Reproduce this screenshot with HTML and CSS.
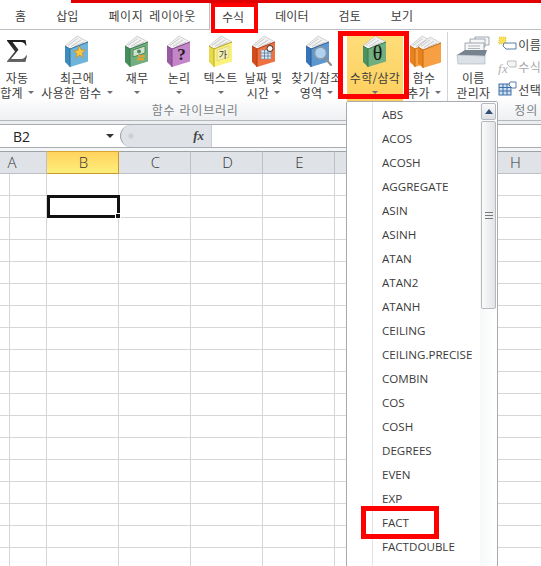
FILE: index.html
```html
<!DOCTYPE html>
<html lang="ko">
<head>
<meta charset="utf-8">
<title>수식</title>
<link rel="stylesheet" href="styles.css">
</head>
<body>
<svg class="defs" width="0" height="0" aria-hidden="true">
  <defs>
    <linearGradient id="sigma-shade" x1="0" y1="0" x2="0" y2="1">
      <stop offset="0" stop-color="#1c1c1c"/>
      <stop offset="0.6" stop-color="#3a3a3a"/>
      <stop offset="1" stop-color="#6a6a6a"/>
    </linearGradient>
    <symbol id="book" viewBox="0 0 26 32">
      <polygon class="b-page" points="1,11 13,1 24,7 6,14"/>
      <path class="b-lines" d="M4 10.500 13.500 3.500M7 11.500 17 5M10 11.500 20 7"/>
      <polygon class="b-spine" points="1,11 6,14 6,32 1,27"/>
      <polygon class="b-front" points="6,14 24,7 24,26.500 6,32"/>
      <path class="b-edge" d="M1 11 6 14 24 7M6 14V32"/>
    </symbol>
  </defs>
</svg>
<div class="page">
  <nav class="tabs">
    <span class="tab">홈</span>
    <span class="tab">삽입</span>
    <span class="tab tab-long">페이지 레이아웃</span>
    <span class="tab tab-active">수식</span>
    <span class="tab">데이터</span>
    <span class="tab">검토</span>
    <span class="tab">보기</span>
  </nav>

  <section class="ribbon">
    <div class="group group-lib">
      <div class="buttons">
        <div class="btn w34">
          <div class="icon">
            <svg width="20" height="22" viewBox="0 0 20 22"><path class="sigma-fill" d="M0 0H18.500L19.500 5.500H18.500C18 3.300 16.500 2 13.500 2H5.500L11.500 9.800 4 19H14C16.800 19 18.300 17.800 19 15.500H20L18.500 22H0V21.300L8 11.500 0 .7Z"/></svg>
          </div>
          <div class="label">자동</div>
          <div class="label">합계<i class="arrow arrow-side"></i></div>
        </div>
        <div class="btn w78">
          <div class="icon">
            <svg class="book book-blue" width="26" height="32"><use href="#book"/><polygon class="star" points="15.500,11 17.300,15 21.500,14.800 18.200,18 19.500,22.500 15.500,20 11.500,23 12.800,18.500 9.500,16 13.700,15.500"/></svg>
          </div>
          <div class="label">최근에</div>
          <div class="label">사용한 함수<i class="arrow arrow-side"></i></div>
        </div>
        <div class="btn w42">
          <div class="icon">
            <svg class="book book-green" width="26" height="32"><use href="#book"/><polygon class="bill" points="9,15 21,11 21,18 9,22"/><circle class="bill-dot" cx="15" cy="16.500" r="2"/><rect class="coin" x="14" y="20" width="7" height="2.500"/><rect class="coin" x="13" y="23" width="7" height="2.500"/></svg>
          </div>
          <div class="label">재무</div>
          <div class="label"><i class="arrow"></i></div>
        </div>
        <div class="btn w42">
          <div class="icon">
            <svg class="book book-purple" width="26" height="32"><use href="#book"/><text class="glyph-q" x="15.500" y="25" text-anchor="middle">?</text></svg>
          </div>
          <div class="label">논리</div>
          <div class="label"><i class="arrow"></i></div>
        </div>
        <div class="btn w41">
          <div class="icon">
            <svg class="book book-yellow" width="26" height="32"><use href="#book"/><polygon class="tile" points="9,15 21,11 21,22 9,26"/><text class="glyph-ga" x="15" y="23" text-anchor="middle">가</text></svg>
          </div>
          <div class="label">텍스트</div>
          <div class="label"><i class="arrow"></i></div>
        </div>
        <div class="btn w45">
          <div class="icon">
            <svg class="book book-red" width="26" height="32"><use href="#book"/><rect class="cal" x="10" y="15" width="10" height="9"/><path class="cal-grid" d="M10 18H20M10 21H20M13.500 15V24M17 15V24"/><circle class="clock" cx="19" cy="13.500" r="3"/></svg>
          </div>
          <div class="label">날짜 및</div>
          <div class="label">시간<i class="arrow arrow-side"></i></div>
        </div>
        <div class="btn w61">
          <div class="icon icon-shift">
            <svg class="book book-navy" width="26" height="32"><use href="#book"/><circle class="lens" cx="15.500" cy="18" r="6"/><path class="handle" d="M20 23 26 30"/></svg>
          </div>
          <div class="label">찾기/참조</div>
          <div class="label">영역<i class="arrow arrow-side"></i></div>
        </div>
        <div class="btn w56 btn-active">
          <div class="icon">
            <svg class="book book-sage" width="26" height="32"><use href="#book"/><text class="glyph-theta" x="15.500" y="25" text-anchor="middle">θ</text></svg>
          </div>
          <div class="label">수학/삼각</div>
          <div class="label"><i class="arrow"></i></div>
        </div>
        <div class="btn w42">
          <div class="icon icon-stack">
            <svg class="book book-orange stack-a" width="26" height="32"><use href="#book"/></svg>
            <svg class="book book-orange stack-b" width="26" height="32"><use href="#book"/></svg>
          </div>
          <div class="label">함수</div>
          <div class="label">추가<i class="arrow arrow-side"></i></div>
        </div>
      </div>
      <div class="group-label group-label-lib">함수 라이브러리</div>
    </div>

    <div class="group group-names">
      <div class="buttons">
        <div class="btn w44">
          <div class="icon">
            <svg width="34" height="30" viewBox="0 0 34 30">
              <path class="tray-card" d="M19 1H33V9H19Z"/>
              <path class="tray-card" d="M14 3H29V11H14Z"/>
              <path class="tray-card" d="M9 7H28V15H9Z"/>
              <path class="tray-lines" d="M12 10H24M12 12.500H24"/>
              <path class="tray-top" d="M1 19 9 14H31L29 20Z"/>
              <path class="tray-front" d="M1 19 29 20V28H2Z"/>
            </svg>
          </div>
          <div class="label">이름</div>
          <div class="label">관리자</div>
        </div>
        <div class="side">
          <div class="side-row">
            <svg width="20" height="16" viewBox="0 0 20 16"><rect class="spark" x="1" y="1" width="7" height="7"/><path class="tag" d="M6 7H18V13H8L5 10Z"/></svg>
            <span>이름</span>
          </div>
          <div class="side-row side-off">
            <svg width="20" height="16" viewBox="0 0 20 16"><text class="mini-fx" x="0" y="14">fx</text><path class="tag-off" d="M10 2H18V8H12L9 5Z"/></svg>
            <span>수식</span>
          </div>
          <div class="side-row">
            <svg width="20" height="16" viewBox="0 0 20 16"><rect class="mini-table" x="1" y="3" width="12" height="11"/><path class="mini-grid" d="M1 6.500H13M1 10H13M5 3V14M9 3V14"/><path class="tag" d="M12 1H18V7H14L11 4Z"/></svg>
            <span>선택</span>
          </div>
        </div>
      </div>
      <div class="group-label group-label-names">정의</div>
    </div>
  </section>

  <div class="formula">
    <div class="namebox"><span>B2</span><i class="arrow arrow-dark"></i></div>
    <div class="fx-pill">
      <span class="fx-dot"></span>
      <span class="fx">fx</span>
    </div>
    <div class="fx-input"></div>
  </div>

  <div class="colhead">
    <div class="col col-a">A</div>
    <div class="col col-sel">B</div>
    <div class="col">C</div>
    <div class="col">D</div>
    <div class="col">E</div>
    <div class="col">F</div>
    <div class="col">G</div>
    <div class="col">H</div>
  </div>
  <div class="grid">
    <div class="cell-sel"><span class="handle-sq"></span></div>
  </div>

  <div class="menu">
    <ul class="items">
      <li>ABS</li>
      <li>ACOS</li>
      <li>ACOSH</li>
      <li>AGGREGATE</li>
      <li>ASIN</li>
      <li>ASINH</li>
      <li>ATAN</li>
      <li>ATAN2</li>
      <li>ATANH</li>
      <li>CEILING</li>
      <li>CEILING.PRECISE</li>
      <li>COMBIN</li>
      <li>COS</li>
      <li>COSH</li>
      <li>DEGREES</li>
      <li>EVEN</li>
      <li>EXP</li>
      <li>FACT</li>
      <li>FACTDOUBLE</li>
    </ul>
    <div class="scroll">
      <div class="scroll-up"><i class="tri-up"></i></div>
      <div class="scroll-thumb"><i class="grip"></i></div>
    </div>
  </div>

  <div class="mark mark-top"></div>
  <div class="mark mark-tab"></div>
  <div class="mark mark-math"></div>
  <div class="mark mark-fact"></div>
</div>
</body>
</html>
```
FILE: styles.css
```css
* { box-sizing: border-box; }
html, body { margin: 0; padding: 0; background: #fff; }
.defs { position: absolute; }
.page {
  position: relative;
  width: 541px;
  height: 566px;
  overflow: hidden;
  font-family: "Noto Sans CJK KR", "Noto Sans", sans-serif;
  font-size: 12px;
  color: #3c3c3c;
  background: #fff;
}

/* tabs */
.tabs {
  display: flex;
  height: 30px;
  padding-top: 3px;
  border-bottom: 1px solid #bcc0c5;
}
.tab {
  padding: 0 15px;
  line-height: 26px;
  letter-spacing: 0.1px;
  white-space: nowrap;
}
.tab-long { letter-spacing: 0.6px; word-spacing: 2px; padding-right: 10px; }
.tab-active {
  margin: 0 3px;
  padding: 0 12px;
  height: 27px;
  background: #fff;
  border: 1px solid #bcc0c5;
  border-bottom: 0;
  line-height: 25px;
}

/* ribbon */
.ribbon {
  display: flex;
  height: 91px;
  background: linear-gradient(#fff 0, #fff 66px, #eef0f3 90px);
  border-bottom: 1px solid #b4b8bd;
}
.group { display: flex; flex-direction: column; }
.group-lib { width: 450px; padding-top: 2px; }
.group-lib .buttons { border-right: 1px solid #d0d3d7; }
.group-names { flex: 1; padding-top: 2px; }
.buttons { display: flex; height: 69px; }
.btn {
  display: flex;
  flex-direction: column;
  align-items: center;
  flex: none;
}
.w34 { width: 34px; margin-right: 4px; }
.w78 { width: 78px; }
.w42 { width: 42px; }
.w41 { width: 41px; }
.w45 { width: 45px; }
.w61 { width: 61px; }
.w56 { width: 56px; }
.w44 { width: 50px; }
.btn-active { background: linear-gradient(#fedd7a, #fdd05e); }
.icon {
  height: 38px;
  display: flex;
  align-items: center;
  justify-content: center;
}
.icon-shift { margin-left: 3px; }
.icon-stack { position: relative; width: 34px; }
.stack-a { position: absolute; left: 2px; top: 3px; }
.stack-b { position: absolute; left: 10px; top: 4px; }
.label {
  height: 15px;
  line-height: 15px;
  white-space: nowrap;
  letter-spacing: 0.3px;
  display: flex;
  align-items: center;
}
.arrow {
  display: inline-block;
  width: 0;
  height: 0;
  border: 3px solid transparent;
  border-top: 3.5px solid #6b6f75;
  border-bottom: 0;
}
.arrow-side { margin-left: 5px; }
.group-label {
  height: 19px;
  line-height: 17px;
  text-align: center;
  color: #7b7f85;
  letter-spacing: 0.8px;
}
.group-label-lib { padding-right: 58px; }
.group-label-names { text-align: left; padding-left: 66px; white-space: nowrap; }

/* book icons */
.book { overflow: visible; }
.b-page { fill: #f3f3f3; stroke: #a9a9a9; stroke-width: .5; }
.b-lines { fill: none; stroke: #b5b5b5; stroke-width: .7; }
.b-spine { fill: var(--spine); }
.b-front { fill: var(--front); }
.b-edge { fill: none; stroke: var(--edge); stroke-width: 1; }
.book-blue { --front: #6fb4da; --spine: #3f8cbc; --edge: #2f729e; }
.book-green { --front: #71ae80; --spine: #478c5c; --edge: #3b7a4e; }
.book-purple { --front: #c486c9; --spine: #9a5aa3; --edge: #7e4688; }
.book-yellow { --front: #fbf27e; --spine: #e8d94a; --edge: #b7a925; }
.book-red { --front: #f0703f; --spine: #d24c1e; --edge: #b23d14; }
.book-navy { --front: #5c97d0; --spine: #3674b5; --edge: #2a5f97; }
.book-sage { --front: #71ae80; --spine: #4b9161; --edge: #3b7a4e; }
.book-orange { --front: #f6a043; --spine: #e8821d; --edge: #c96c12; }
.sigma-fill { fill: url(#sigma-shade); }
.star { fill: #f8c642; stroke: #c98a1f; stroke-width: .7; }
.bill { fill: #cfe3cc; stroke: #3c7a4c; stroke-width: .8; }
.bill-dot { fill: #4c8a5c; }
.coin { fill: #d9a63a; }
.glyph-q { font: bold 17px "Liberation Serif", serif; fill: #1d1d1d; }
.tile { fill: #f4eeb0; stroke: #c9c06a; stroke-width: .5; }
.glyph-ga { font: 9px "Noto Sans CJK KR", sans-serif; fill: #333; }
.cal { fill: #dfe9f5; stroke: #7a8fa8; stroke-width: .6; }
.cal-grid { stroke: #5678a0; stroke-width: .8; fill: none; }
.clock { fill: #fff; stroke: #333; stroke-width: 1; }
.lens { fill: #bcdcf4; fill-opacity: .85; stroke: #8a98a6; stroke-width: 1.600; }
.handle { stroke: #8e8e8e; stroke-width: 2; stroke-linecap: round; }
.glyph-theta { font: 20px "Liberation Serif", serif; fill: #141414; }

/* name manager icon */
.tray-card { fill: #f6f6f6; stroke: #8c96a1; stroke-width: .8; }
.tray-top { fill: #76838f; }
.tray-front { fill: #dbe1e7; stroke: #a4aeb8; stroke-width: .6; }
.tray-lines { stroke: #9aa4af; stroke-width: .8; }

.side { display: flex; flex-direction: column; margin-top: 1px; }
.side-row {
  display: flex;
  align-items: center;
  height: 22.500px;
  white-space: nowrap;
  letter-spacing: 0.3px;
}
.side-off { color: #a9a9a9; }
.spark { fill: #f7e25a; stroke: #d6b52e; stroke-width: .6; stroke-dasharray: 1 1; }
.tag { fill: #fff; stroke: #5a7fa8; stroke-width: 1; }
.tag-off { fill: #f5f5f5; stroke: #bcbcbc; stroke-width: 1; }
.mini-fx { font: italic 13px "Liberation Serif", serif; fill: #b0b0b0; }
.mini-table { fill: #cfe0f2; stroke: #3f6ea5; stroke-width: 1; }
.mini-grid { stroke: #3f6ea5; stroke-width: 1; fill: none; }

/* formula bar */
.formula {
  display: flex;
  height: 24px;
  margin-top: 3px;
  background: #fff;
  border-top: 1px solid #a9adb2;
  border-bottom: 1px solid #a9adb2;
  box-shadow: 0 -3px 0 #eceef0;
}
.namebox {
  width: 120px;
  display: flex;
  align-items: center;
  justify-content: space-between;
  padding: 0 6px 0 13px;
  font-family: "Open Sans", sans-serif;
  font-size: 14px;
  color: #222;
}
.arrow-dark { border-width: 4px; border-top: 4px solid #333; border-bottom: 0; }
.fx-pill {
  width: 92px;
  display: flex;
  align-items: center;
  justify-content: space-between;
  padding: 0 7px 0 6px;
  background: #dfe3e8;
  border-left: 1px solid #9ea3a8;
  border-radius: 11px 0 0 11px;
  border-right: 1px solid #c9cdd2;
}
.fx-dot {
  width: 8px;
  height: 8px;
  border-radius: 50%;
  background: radial-gradient(#c3c6ca, #eef0f2);
}
.fx { font: italic bold 13px "Liberation Serif", serif; color: #444; }
.fx-input { flex: 1; }

/* sheet */
.colhead {
  display: flex;
  height: 26px;
  padding-top: 3px;
  background: #f4f5f6;
}
.col {
  width: 72px;
  flex: none;
  height: 23px;
  padding-left: 2px;
  text-align: center;
  line-height: 20px;
  font-family: "Open Sans", sans-serif;
  font-weight: 300;
  font-size: 15px;
  color: #333;
  background: #dfe3e8;
  border-top: 1px solid #9ea3a8;
  border-right: 1px solid #bcc0c5;
  border-bottom: 1px solid #bcc0c5;
}
.col-a { width: 47px; padding-left: 0; padding-right: 22px; }
.col-sel {
  background: linear-gradient(#ffd35e, #ffee7b);
  border-top-color: #d9a32f;
  border-bottom: 1px solid #c79a2e;
  border-right: 1px solid #c79a2e;
}
.grid {
  position: relative;
  height: 400px;
  background-color: #fff;
  background-image:
    repeating-linear-gradient(to bottom, transparent 0 21px, #d6d6d6 21px 22px),
    linear-gradient(to right, transparent 46px, #d6d6d6 46px 47px, transparent 47px),
    repeating-linear-gradient(to right, transparent 0 71px, #d6d6d6 71px 72px);
  background-position: 0 0, 0 0, 47px 0;
}
.cell-sel {
  position: absolute;
  left: 47px;
  top: 21px;
  width: 73px;
  height: 23px;
  border: 3px solid #111;
}
.handle-sq {
  position: absolute;
  right: -4px;
  bottom: -4px;
  width: 6px;
  height: 6px;
  background: #111;
  border: 1px solid #fff;
}

/* dropdown */
.menu {
  position: absolute;
  left: 346px;
  top: 101px;
  width: 152px;
  height: 480px;
  display: flex;
  background: #fff;
  border: 1px solid #a7abb0;
  border-radius: 2px 2px 0 0;
}
.items {
  width: 133px;
  margin: 0;
  padding: 1px 0 0;
  list-style: none;
  background: linear-gradient(to right, #fff 25px, #e2e4e7 25px 26px, #fff 26px);
}
.items li {
  height: 24px;
  line-height: 24px;
  padding-left: 35px;
  font-family: "Open Sans", sans-serif;
  font-size: 11.600px;
  color: #3c3c3c;
  white-space: nowrap;
}
.scroll {
  width: 17px;
  padding: 1px 1px 0 1px;
  background: linear-gradient(to right, #f7f8f9, #fff);
}
.scroll-up {
  height: 17px;
  display: flex;
  align-items: center;
  justify-content: center;
  background: linear-gradient(#fafafa, #dde0e3);
  border: 1px solid #b5b9bd;
  border-radius: 2px;
}
.tri-up {
  width: 0;
  height: 0;
  border: 4.500px solid transparent;
  border-bottom: 5px solid #2d4f79;
  border-top: 0;
}
.scroll-thumb {
  height: 188px;
  margin-top: 1px;
  display: flex;
  align-items: center;
  justify-content: center;
  background: linear-gradient(to right, #fafafa, #e2e4e7);
  border: 1px solid #b5b9bd;
  border-radius: 2px;
}
.grip {
  width: 8px;
  height: 7px;
  border-top: 1px solid #777;
  border-bottom: 1px solid #777;
  background: linear-gradient(transparent 2px, #777 2px 3px, transparent 3px);
}

/* red annotations */
.mark { position: absolute; border: 5px solid #f00; }
.mark-top { left: 71px; top: 0; width: 470px; height: 3px; border: 0; background: #e00000; }
.mark-tab { left: 211px; top: 3px; width: 47px; height: 30px; border-width: 4px; }
.mark-math { left: 338px; top: 31px; width: 71px; height: 68px; }
.mark-fact { left: 361px; top: 506px; width: 78px; height: 33px; }
```
